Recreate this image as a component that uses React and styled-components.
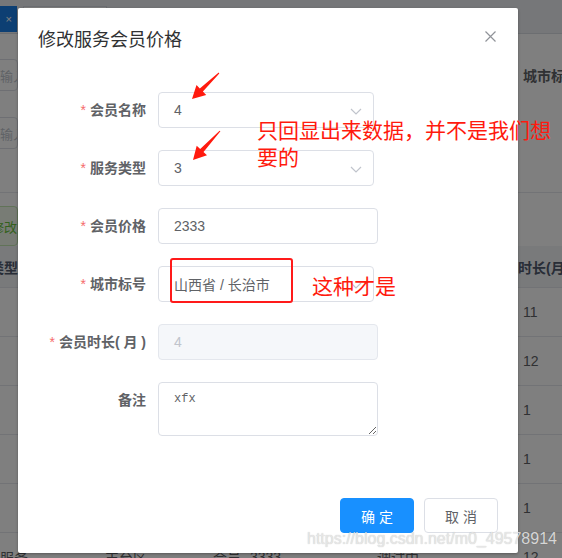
import React from "react";
import styled, { createGlobalStyle } from "styled-components";

// GLOBAL
const GlobalStyle = createGlobalStyle`
  html, body {
    margin: 0;
    padding: 0;
    background: #fff;
  }
  body {
    font-family: "Liberation Sans", "Noto Sans CJK SC", sans-serif;
  }
  * {
    box-sizing: border-box;
  }
`;

const Screen = styled.div`
  position: relative;
  width: 562px;
  height: 558px;
  overflow: hidden;
  background: #fff;
`;

// BACKGROUND PAGE
const TopBar = styled.div`
  height: 34px;
  display: flex;
  align-items: flex-start;
  gap: 6px;
  padding-top: 6px;
  background: #eceef2;
  border-bottom: 1px solid #d8dce3;
`;
const Tab = styled.div`
  flex-shrink: 0;
  height: 26px;
  width: ${p => p.width}px;
  margin-left: ${p => p.offset || 0}px;
  display: flex;
  align-items: center;
  justify-content: flex-end;
  padding: 0 4px;
  font-size: 11px;
  color: ${p => (p.active ? "#fff" : "#495060")};
  background: ${p => (p.active ? "#1b7ee6" : "#fff")};
  border: 1px solid ${p => (p.active ? "#1b7ee6" : "#d8dce5")};
`;

const FilterSection = styled.div`
  display: flex;
  flex-direction: column;
  padding-top: 25px;
`;
const FilterRow = styled.div`
  display: flex;
  align-items: center;
  height: 32px;
  margin-top: ${p => p.gap || 0}px;
`;
const FilterInput = styled.div`
  flex-shrink: 0;
  width: 47px;
  height: 32px;
  margin-left: -29px;
  padding-left: 15px;
  display: flex;
  align-items: center;
  white-space: nowrap;
  overflow: hidden;
  font-size: 13px;
  color: #c0c4cc;
  border: 1px solid #dcdfe6;
  border-radius: 4px;
`;
const FilterLabel = styled.div`
  flex-shrink: 0;
  margin-left: 505px;
  white-space: nowrap;
  font-size: 14px;
  font-weight: 700;
  color: #606266;
`;
const Divider = styled.div`
  margin-top: 43px;
  height: 1px;
  background: #e4e7ed;
`;
const ActionRow = styled.div`
  margin-top: 13px;
  height: 40px;
  display: flex;
  align-items: center;
`;
const GreenButton = styled.div`
  flex-shrink: 0;
  width: 70px;
  height: 40px;
  margin-left: -52px;
  display: flex;
  align-items: center;
  justify-content: flex-end;
  font-size: 13px;
  color: #67c23a;
  background: #f0f9eb;
  border: 1px solid #c2e7b0;
  border-radius: 4px;
`;

const TableRow = styled.div`
  display: grid;
  grid-template-columns: 138px 105px 40px 125px 148px 1fr;
  align-items: center;
  width: 640px;
  margin-left: -38px;
  height: ${p => (p.head ? 42 : 49)}px;
  background: ${p => (p.head ? "#f2f4f7" : "#fff")};
  border-bottom: 1px solid #e4e7ed;
  font-size: 14px;
  font-weight: ${p => (p.head ? 700 : 400)};
  color: ${p => (p.head ? "#515a6e" : "#606266")};
  white-space: nowrap;
`;
const Cell = styled.div`
  padding-left: ${p => p.pad || 0}px;
  overflow: hidden;
`;

// DIALOG
const Overlay = styled.div`
  position: absolute;
  inset: 0;
  padding: 8px 0 0 18px;
  background: rgba(0, 0, 0, 0.5);
`;
const Dialog = styled.div`
  width: 500px;
  height: 545px;
  display: flex;
  flex-direction: column;
  background: #fff;
  border-radius: 2px;
  box-shadow: 0 1px 3px rgba(0, 0, 0, 0.3);
`;
const DialogHeader = styled.div`
  position: relative;
  padding: 20px 20px 10px;
`;
const Title = styled.div`
  font-size: 18px;
  line-height: 24px;
  color: #303133;
`;
const CloseButton = styled.div`
  position: absolute;
  top: 23px;
  right: 22px;
  width: 11px;
  height: 11px;
  display: flex;
`;
const DialogBody = styled.div`
  display: flex;
  flex-direction: column;
  gap: 22px;
  padding: 30px 20px 0;
`;
const FormItem = styled.div`
  display: flex;
  align-items: flex-start;
`;
const Label = styled.div`
  width: 120px;
  padding-right: 12px;
  line-height: 36px;
  text-align: right;
  font-size: 14px;
  font-weight: 700;
  color: #606266;
  white-space: nowrap;
`;
const Star = styled.span`
  color: #f56c6c;
  margin-right: 4px;
  font-weight: 400;
`;
const Field = styled.div`
  position: relative;
  width: ${p => p.width}px;
  height: 36px;
  display: flex;
  align-items: center;
  padding: 0 15px;
  font-size: 14px;
  color: ${p => (p.disabled ? "#c0c4cc" : "#606266")};
  background: ${p => (p.disabled ? "#f5f7fa" : "#fff")};
  border: 1px solid ${p => (p.disabled ? "#e4e7ed" : "#dcdfe6")};
  border-radius: 4px;
`;
const Chevron = styled.svg`
  position: absolute;
  right: 11px;
  top: 15px;
`;
const TextArea = styled.textarea`
  width: 220px;
  height: 54px;
  padding: 7px 15px;
  resize: vertical;
  font-family: "Liberation Mono", monospace;
  font-size: 12px;
  line-height: 1.5;
  color: #606266;
  border: 1px solid #dcdfe6;
  border-radius: 4px;
  outline: none;
`;
const Footer = styled.div`
  margin-top: auto;
  display: flex;
  justify-content: flex-end;
  gap: 10px;
  padding: 10px 20px 20px;
`;
const Button = styled.div`
  width: 74px;
  height: 35px;
  display: flex;
  align-items: center;
  justify-content: center;
  font-size: 14px;
  border-radius: 4px;
  color: ${p => (p.primary ? "#fff" : "#606266")};
  background: ${p => (p.primary ? "#1890ff" : "#fff")};
  border: 1px solid ${p => (p.primary ? "#1890ff" : "#dcdfe6")};
`;

// ANNOTATIONS
const ArrowLayer = styled.svg`
  position: absolute;
  left: 0;
  top: 0;
  pointer-events: none;
`;
const Note = styled.div`
  position: absolute;
  left: ${p => p.x}px;
  top: ${p => p.y}px;
  font-family: "Noto Sans CJK SC", sans-serif;
  font-size: 21px;
  line-height: 27px;
  color: #ff1a0e;
  white-space: nowrap;
`;
const Marker = styled.div`
  position: absolute;
  left: 170px;
  top: 258px;
  width: 123px;
  height: 45px;
  border: 2px solid #ff1a1a;
  border-radius: 3px;
`;
const Watermark = styled.div`
  position: absolute;
  left: 307px;
  top: 530px;
  font-family: "Liberation Sans", sans-serif;
  font-size: 16px;
  line-height: 18px;
  color: rgba(236, 236, 236, 0.85);
  text-shadow: 0 0 1px rgba(0, 0, 0, 0.25);
  white-space: nowrap;
`;

// arrow polygon from tail to tip
function arrowPoints([tx, ty], [px, py]) {
  const dx = px - tx;
  const dy = py - ty;
  const len = Math.hypot(dx, dy);
  const ux = dx / len;
  const uy = dy / len;
  const nx = -uy;
  const ny = ux;
  const bx = px - 13 * ux;
  const by = py - 13 * uy;
  const pts = [
    [tx + 0.5 * nx, ty + 0.5 * ny],
    [bx + 2.2 * nx, by + 2.2 * ny],
    [bx + 7 * nx, by + 7 * ny],
    [px, py],
    [bx - 7 * nx, by - 7 * ny],
    [bx - 2.2 * nx, by - 2.2 * ny],
    [tx - 0.5 * nx, ty - 0.5 * ny]
  ];
  return pts.map(p => p.map(v => v.toFixed(1)).join(",")).join(" ");
}

const rows = [
  ["", "北京市", "会员", "1999", "启用", "11"],
  ["", "天津市", "会员", "2999", "启用", "12"],
  ["", "上海市", "会员", "99", "启用", "1"],
  ["", "重庆市", "会员", "99", "启用", "1"],
  ["", "长治市", "会员", "2333", "启用", "1"],
  ["会员服务", "丰台区", "会员", "3333", "调试中", "12"]
];

const ChevronIcon = () => (
  <Chevron width="12" height="7" viewBox="0 0 12 7">
    <path d="M1 1l5 5 5-5" fill="none" stroke="#c0c4cc" strokeWidth="1.2" />
  </Chevron>
);

// COMPONENT
export default function App() {
  return (
    <Screen>
      <GlobalStyle />

      {/* page behind the dialog */}
      <TopBar>
        <Tab active width={57} offset={-40}>×</Tab>
        <Tab width={84}>会员价格</Tab>
      </TopBar>
      <FilterSection>
        <FilterRow>
          <FilterInput>请输入</FilterInput>
          <FilterLabel>城市标号</FilterLabel>
        </FilterRow>
        <FilterRow gap={26}>
          <FilterInput>请输入</FilterInput>
        </FilterRow>
        <Divider />
        <ActionRow>
          <GreenButton>修改</GreenButton>
        </ActionRow>
      </FilterSection>
      <TableRow head>
        <Cell>服务类型</Cell>
        <Cell pad={5}>城市</Cell>
        <Cell pad={8}>名称</Cell>
        <Cell pad={5}>价格</Cell>
        <Cell pad={7}>状态</Cell>
        <Cell>时长(月)</Cell>
      </TableRow>
      {rows.map((r, i) => (
        <TableRow key={i}>
          <Cell pad={10}>{r[0]}</Cell>
          <Cell pad={5}>{r[1]}</Cell>
          <Cell pad={8}>{r[2]}</Cell>
          <Cell pad={5}>{r[3]}</Cell>
          <Cell pad={7}>{r[4]}</Cell>
          <Cell pad={5}>{r[5]}</Cell>
        </TableRow>
      ))}

      {/* modal */}
      <Overlay>
        <Dialog>
          <DialogHeader>
            <Title>修改服务会员价格</Title>
            <CloseButton>
              <svg width="11" height="11" viewBox="0 0 11 11">
                <path d="M0.5 0.5l10 10M10.5 0.5l-10 10" stroke="#909399" strokeWidth="1.2" />
              </svg>
            </CloseButton>
          </DialogHeader>
          <DialogBody>
            <FormItem>
              <Label><Star>*</Star>会员名称</Label>
              <Field width={216}>4<ChevronIcon /></Field>
            </FormItem>
            <FormItem>
              <Label><Star>*</Star>服务类型</Label>
              <Field width={216}>3<ChevronIcon /></Field>
            </FormItem>
            <FormItem>
              <Label><Star>*</Star>会员价格</Label>
              <Field width={220}>2333</Field>
            </FormItem>
            <FormItem>
              <Label><Star>*</Star>城市标号</Label>
              <Field width={216}>山西省 / 长治市<ChevronIcon /></Field>
            </FormItem>
            <FormItem>
              <Label><Star>*</Star>会员时长( 月 )</Label>
              <Field width={220} disabled>4</Field>
            </FormItem>
            <FormItem>
              <Label>备注</Label>
              <TextArea readOnly defaultValue="xfx" />
            </FormItem>
          </DialogBody>
          <Footer>
            <Button primary>确 定</Button>
            <Button>取 消</Button>
          </Footer>
        </Dialog>
      </Overlay>

      {/* red annotations drawn on the screenshot */}
      <ArrowLayer width="562" height="558" viewBox="0 0 562 558">
        <polygon points={arrowPoints([219, 73], [192, 99])} fill="#ff1a0e" />
        <polygon points={arrowPoints([220, 131], [193, 160])} fill="#ff1a0e" />
      </ArrowLayer>
      <Note x={257} y={116}>
        只回显出来数据，并不是我们想
        <br />
        要的
      </Note>
      <Marker />
      <Note x={312} y={272}>这种才是</Note>
      <Watermark>https://blog.csdn.net/m0_49578914</Watermark>
    </Screen>
  );
}
